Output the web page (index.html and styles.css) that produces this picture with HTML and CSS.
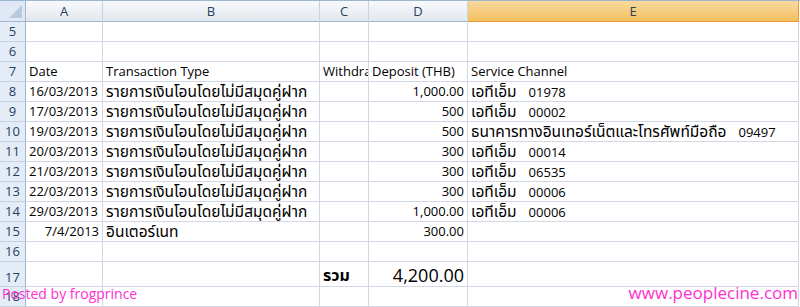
FILE: index.html
```html
<!DOCTYPE html>
<html lang="th">
<head>
<meta charset="utf-8">
<title>Sheet</title>
<link rel="stylesheet" href="styles.css">
</head>
<body>
<div class="wrap">
  <div class="sheet">
    <div class="hd corner"><span class="tri"></span></div>
    <div class="hd col">A</div>
    <div class="hd col">B</div>
    <div class="hd col">C</div>
    <div class="hd col">D</div>
    <div class="hd col sel">E</div>

    <div class="rn">5</div><div class="c"></div><div class="c"></div><div class="c"></div><div class="c"></div><div class="c"></div>
    <div class="rn">6</div><div class="c"></div><div class="c"></div><div class="c"></div><div class="c"></div><div class="c"></div>

    <div class="rn">7</div><div class="c">Date</div><div class="c">Transaction Type</div><div class="c clip">Withdrawal (THB)</div><div class="c">Deposit (THB)</div><div class="c">Service Channel</div>

    <div class="rn">8</div><div class="c">16/03/2013</div><div class="c"><span class="th">รายการเงินโอนโดยไม่มีสมุดคู่ฝาก</span></div><div class="c"></div><div class="c r">1,000.00</div><div class="c"><span class="th">เอทีเอ็ม</span><span class="code">01978</span></div>
    <div class="rn">9</div><div class="c">17/03/2013</div><div class="c"><span class="th">รายการเงินโอนโดยไม่มีสมุดคู่ฝาก</span></div><div class="c"></div><div class="c r">500</div><div class="c"><span class="th">เอทีเอ็ม</span><span class="code">00002</span></div>
    <div class="rn">10</div><div class="c">19/03/2013</div><div class="c"><span class="th">รายการเงินโอนโดยไม่มีสมุดคู่ฝาก</span></div><div class="c"></div><div class="c r">500</div><div class="c"><span class="th">ธนาคารทางอินเทอร์เน็ตและโทรศัพท์มือถือ</span><span class="code">09497</span></div>
    <div class="rn">11</div><div class="c">20/03/2013</div><div class="c"><span class="th">รายการเงินโอนโดยไม่มีสมุดคู่ฝาก</span></div><div class="c"></div><div class="c r">300</div><div class="c"><span class="th">เอทีเอ็ม</span><span class="code">00014</span></div>
    <div class="rn">12</div><div class="c">21/03/2013</div><div class="c"><span class="th">รายการเงินโอนโดยไม่มีสมุดคู่ฝาก</span></div><div class="c"></div><div class="c r">300</div><div class="c"><span class="th">เอทีเอ็ม</span><span class="code">06535</span></div>
    <div class="rn">13</div><div class="c">22/03/2013</div><div class="c"><span class="th">รายการเงินโอนโดยไม่มีสมุดคู่ฝาก</span></div><div class="c"></div><div class="c r">300</div><div class="c"><span class="th">เอทีเอ็ม</span><span class="code">00006</span></div>
    <div class="rn">14</div><div class="c">29/03/2013</div><div class="c"><span class="th">รายการเงินโอนโดยไม่มีสมุดคู่ฝาก</span></div><div class="c"></div><div class="c r">1,000.00</div><div class="c"><span class="th">เอทีเอ็ม</span><span class="code">00006</span></div>
    <div class="rn">15</div><div class="c r">7/4/2013</div><div class="c"><span class="th">อินเตอร์เนท</span></div><div class="c"></div><div class="c r">300.00</div><div class="c"></div>
    <div class="rn">16</div><div class="c"></div><div class="c"></div><div class="c"></div><div class="c"></div><div class="c"></div>

    <div class="rn tall">17</div><div class="c tall"></div><div class="c tall"></div><div class="c tall total-label">รวม</div><div class="c tall r total">4,200.00</div><div class="c tall"></div>
    <div class="rn">18</div><div class="c"></div><div class="c"></div><div class="c"></div><div class="c"></div><div class="c"></div>
  </div>
  <div class="mark left">Posted by frogprince</div>
  <div class="mark right">www.peoplecine.com</div>
</div>
</body>
</html>
```

FILE: styles.css
```css
* { box-sizing: border-box; }
html, body { margin: 0; padding: 0; background: #ffffff; }
body { width: 800px; height: 307px; overflow: hidden; }

.wrap { position: relative; width: 800px; height: 307px; overflow: hidden; }

.sheet {
  display: grid;
  grid-template-columns: 26px 77px 217px 49px 99px 331px;
  grid-template-rows: 21px repeat(12, 20px) 25px 20px;
  border-top: 1px solid #9eb6ce;
  font-family: "Open Sans", "Noto Sans", "Noto Sans Thai", "Loma", "Tahoma", sans-serif;
  font-size: 13px;
  color: #000;
}

.hd {
  background: linear-gradient(#f8f9fb, #e3e8ef);
  border-right: 1px solid #c8d3e0;
  border-bottom: 1px solid #9eb6ce;
  color: #27415f;
  font-size: 13px;
  line-height: 20px;
  text-align: center;
}
.hd.sel {
  background: linear-gradient(#f9d99f, #f1c15f);
  border-bottom-color: #f29536;
  border-right-color: #f29536;
}
.corner {
  position: relative;
  background: #dfe8f4;
  border-right: 1px solid #9eb6ce;
}
.tri {
  position: absolute;
  right: 3px;
  bottom: 3px;
  width: 0;
  height: 0;
  border-left: 13px solid transparent;
  border-bottom: 13px solid #b8cadf;
}

.rn {
  background: #e4ecf7;
  border-right: 1px solid #9eb6ce;
  border-bottom: 1px solid #c5d1df;
  color: #27415f;
  text-align: center;
  line-height: 19px;
  font-size: 13px;
}

.c {
  border-right: 1px solid #d0d7e5;
  border-bottom: 1px solid #d0d7e5;
  line-height: 19px;
  padding: 0 2px 0 3px;
  white-space: nowrap;
  overflow: visible;
  position: relative;
}
.c.r { text-align: right; padding-right: 3px; }
.c.clip { overflow: hidden; }
.th { font-size: 15.5px; line-height: 19px; }
.code { margin-left: 12px; }

.rn.tall { line-height: 30px; }
.c.tall { line-height: 24px; }
.total-label { font-weight: bold; font-size: 16px; padding-top: 1px; }
.total { font-size: 18px; padding-top: 1px; }

.mark {
  position: absolute;
  color: #ff30d0;
  font-family: "Open Sans", "Noto Sans", sans-serif;
  white-space: nowrap;
  line-height: normal;
}
.mark.left { left: 2px; top: 284px; font-size: 14px; }
.mark.right { right: 2px; top: 281px; font-size: 17px; }
```
